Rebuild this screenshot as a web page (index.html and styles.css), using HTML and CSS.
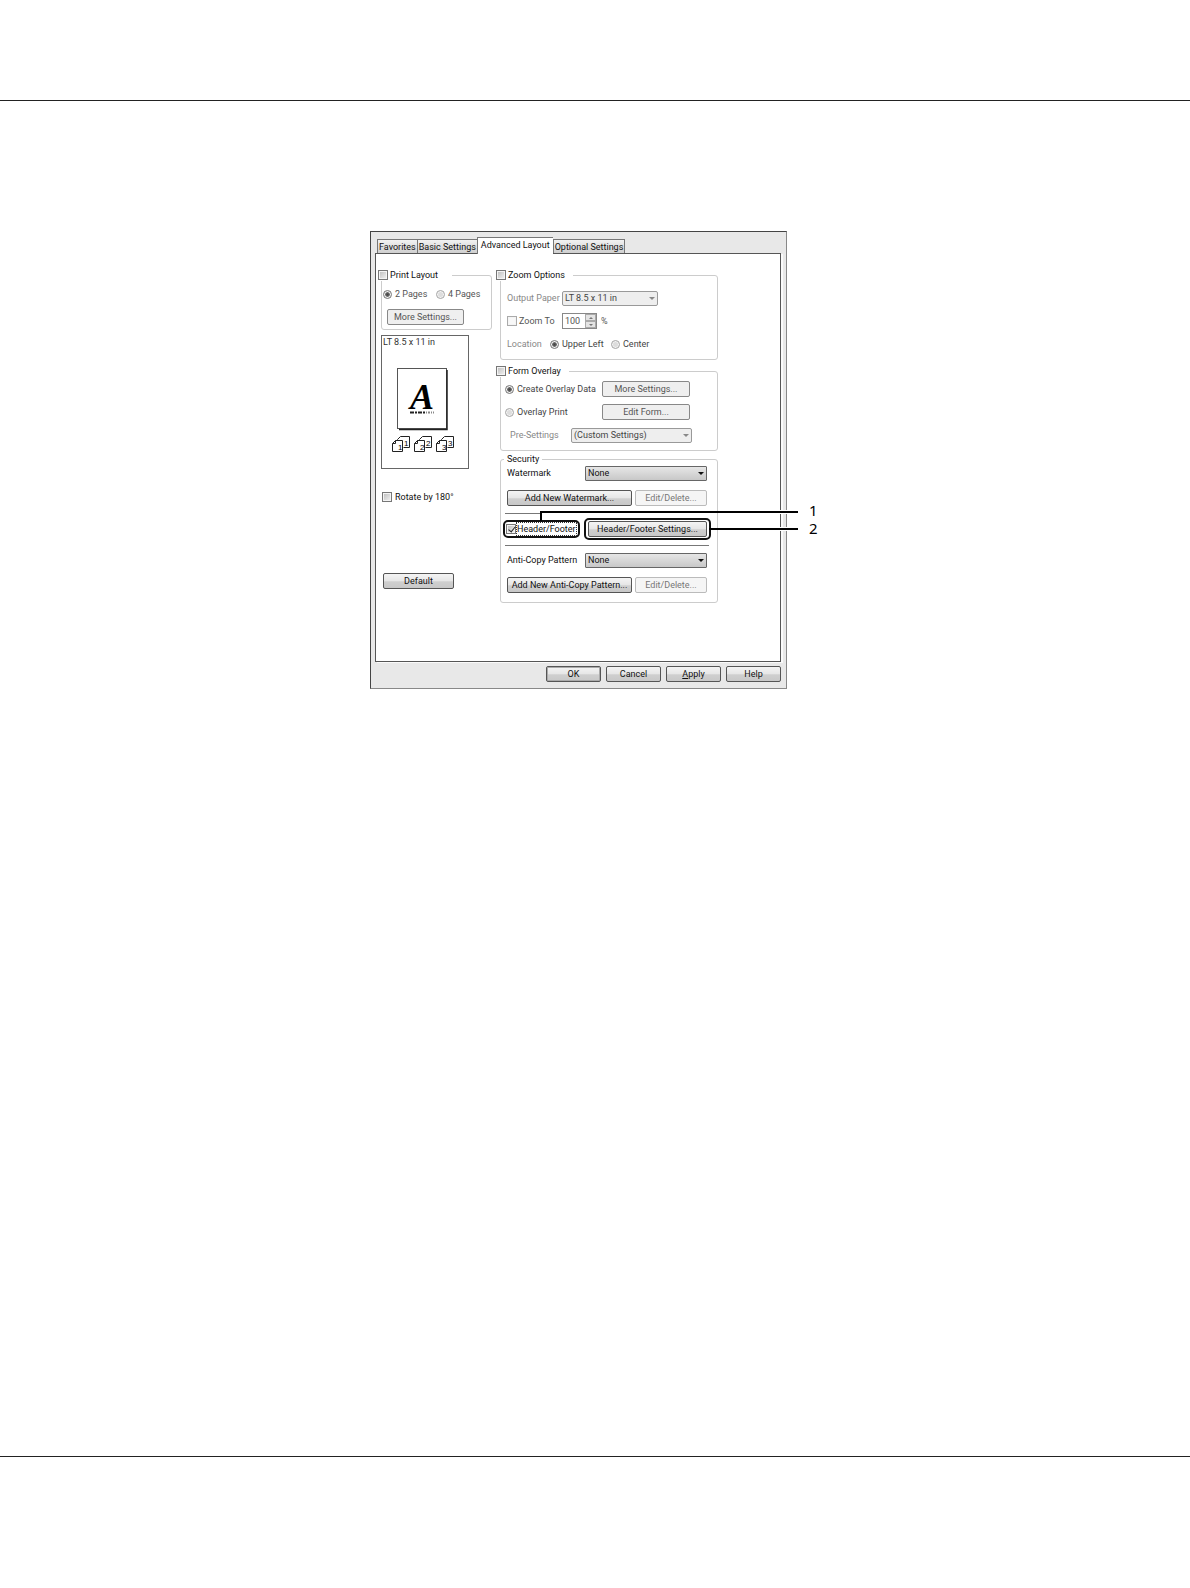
FILE: index.html
```
<!DOCTYPE html>
<html lang="en">
<head>
<meta charset="UTF-8">
<title>Advanced Layout</title>
<link rel="stylesheet" href="styles.css">
</head>
<body>
<header class="page_head"></header>
<main class="page_main">
<div class="figure">
<form class="dialog" onsubmit="return false">
	<div class="tabs" role="tablist">
		<button type="button" role="tab" class="tab">Favorites</button>
		<button type="button" role="tab" class="tab">Basic Settings</button>
		<button type="button" role="tab" class="tab active" aria-selected="true">Advanced Layout</button>
		<button type="button" role="tab" class="tab">Optional Settings</button>
	</div>
	<div class="panel">
		<div class="left">
			<fieldset class="group print">
				<legend><label><input type="checkbox">Print Layout</label></legend>
				<div class="row dim">
					<label class="pages"><input type="radio" name="pages" checked>2 Pages</label>
					<label><input type="radio" name="pages">4 Pages</label>
				</div>
				<button type="button" class="btn off more">More Settings...</button>
			</fieldset>
			<div class="preview">
				<p class="paper">LT 8.5 x 11 in</p>
				<svg width="86" height="100" viewBox="0 0 86 100">
					<rect x="15.5" y="13.5" width="49" height="60" fill="#fff" stroke="#555"/>
					<path d="M65 15v59.500H17" fill="none" stroke="#222" stroke-width="1.500"/>
					<text x="28" y="54" class="big_a">A</text>
					<path d="M28 57.500h15" stroke="#222" stroke-width="2" stroke-dasharray="4 1 2 1"/>
					<path d="M44 57.500h8" stroke="#888" stroke-width="2" stroke-dasharray="1 1 2 1"/>
					<g fill="#fff" stroke="#222">
						<path d="M15.500 86V84.500l3-3h9v11h-6M10.500 88.500l3-3h7v11h-10zM10.500 88.500h3v-3"/>
						<path d="M37.500 86V84.500l3-3h9v11h-6M32.500 88.500l3-3h7v11h-10zM32.500 88.500h3v-3"/>
						<path d="M59.500 86V84.500l3-3h9v11h-6M54.500 88.500l3-3h7v11h-10zM54.500 88.500h3v-3"/>
					</g>
					<g class="nums">
						<text x="16" y="95">1</text><text x="22" y="91">1</text>
						<text x="38" y="95">2</text><text x="44" y="91">2</text>
						<text x="60" y="95">3</text><text x="66" y="91">3</text>
					</g>
				</svg>
			</div>
			<label class="rotate"><input type="checkbox">Rotate by 180°</label>
			<button type="button" class="btn default">Default</button>
		</div>
		<div class="right">
			<fieldset class="group zoom">
				<legend><label><input type="checkbox">Zoom Options</label></legend>
				<div class="row">
					<label class="lbl faint" for="paper">Output Paper</label>
					<span class="sel off paper_sel"><select id="paper"><option>LT 8.5 x 11 in</option></select></span>
				</div>
				<div class="row">
					<label class="lbl dim"><input type="checkbox" class="flat">Zoom To</label>
					<span class="spin">
						<input type="text" value="100" aria-label="Zoom percent">
						<span class="arrows">
							<button type="button" aria-label="Up"></button>
							<button type="button" class="down" aria-label="Down"></button>
						</span>
					</span>
					<span class="dim">%</span>
				</div>
				<div class="row">
					<span class="loc faint">Location</span>
					<label class="upper"><input type="radio" name="loc" checked>Upper Left</label>
					<label><input type="radio" name="loc">Center</label>
				</div>
			</fieldset>
			<fieldset class="group overlay">
				<legend><label><input type="checkbox">Form Overlay</label></legend>
				<div class="row">
					<label class="kind"><input type="radio" name="form" checked>Create Overlay Data</label>
					<button type="button" class="btn off wide">More Settings...</button>
				</div>
				<div class="row">
					<label class="kind"><input type="radio" name="form">Overlay Print</label>
					<button type="button" class="btn off wide">Edit Form...</button>
				</div>
				<div class="row">
					<label class="pre faint" for="pre">Pre-Settings</label>
					<span class="sel off pre_sel"><select id="pre"><option>(Custom Settings)</option></select></span>
				</div>
			</fieldset>
			<fieldset class="group security">
				<legend>Security</legend>
				<div class="row">
					<label class="name" for="wm">Watermark</label>
					<span class="sel"><select id="wm"><option>None</option></select></span>
				</div>
				<div class="row pair">
					<button type="button" class="btn add">Add New Watermark...</button>
					<button type="button" class="btn off light edit">Edit/Delete...</button>
				</div>
				<hr class="short">
				<div class="marked">
					<label class="mark_check"><input type="checkbox" checked><span class="focus">Header/Footer</span></label>
					<span class="mark_btn"><button type="button" class="btn">Header/Footer Settings...</button></span>
				</div>
				<hr>
				<div class="row">
					<label class="name" for="ac">Anti-Copy Pattern</label>
					<span class="sel"><select id="ac"><option>None</option></select></span>
				</div>
				<div class="row pair">
					<button type="button" class="btn add">Add New Anti-Copy Pattern...</button>
					<button type="button" class="btn off light edit">Edit/Delete...</button>
				</div>
			</fieldset>
		</div>
	</div>
	<div class="actions">
		<button type="button" class="btn ok">OK</button>
		<button type="button" class="btn">Cancel</button>
		<button type="button" class="btn"><u>A</u>pply</button>
		<button type="button" class="btn">Help</button>
	</div>
</form>
<!-- callout lines lie over the dialog -->
<svg class="callouts" width="450" height="458" viewBox="0 0 450 458">
	<g fill="none" stroke="#fff" stroke-width="4">
		<path d="M405 281h23M405 298h23"/>
	</g>
	<g fill="none" stroke="#000" stroke-width="2">
		<path d="M171 290v-9h257M339 298h89"/>
	</g>
	<text x="439" y="285">1</text>
	<text x="439" y="303">2</text>
</svg>
</div>
</main>
<footer class="page_foot"></footer>
</body>
</html>
```

FILE: styles.css
```
* {
	box-sizing: border-box;
}
body {
	margin: 0;
	min-height: 100vh;
	display: flex;
	flex-direction: column;
	background: #fff;
	color: #111;
	font-family: Roboto, "Liberation Sans", Arial, sans-serif;
	font-size: 9px;
	line-height: 12px;
}
button, input, select {
	font: inherit;
	color: inherit;
	margin: 0;
}
.page_head {
	height: 101px;
	border-bottom: 1px solid #222;
}
.page_main {
	flex: 1;
	padding-top: 130px;
}
.page_foot {
	height: 132px;
	border-top: 1px solid #222;
}
.figure {
	position: relative;
	width: 450px;
	margin: 0 auto;
	padding-right: 33px;
}

/* dialog window */
.dialog {
	padding: 4px 5px 6px 4px;
	background: #e8e8e8;
	border: 1px solid #888;
	border-top-color: #444;
	border-left: 1px solid #444;
}
.tabs {
	display: flex;
	align-items: flex-end;
	height: 17px;
	padding-left: 2px;
}
.tab {
	height: 14px;
	padding: 0 1px;
	border: 1px solid #777;
	border-bottom: 0;
	border-right: 0;
	background: linear-gradient(#f2f2f2, #cfcfcf);
	line-height: 12px;
	white-space: nowrap;
}
.tab:last-child {
	border-right: 1px solid #777;
}
.tab.active {
	height: 17px;
	margin-bottom: -1px;
	padding: 0 3px 3px;
	background: #fff;
	position: relative;
}
.panel {
	display: flex;
	justify-content: space-between;
	padding: 15px 62px 58px 5px;
	background: #fff;
	border: 1px solid #555;
	box-shadow: 2px 1px 0 #fafafa;
}
.left {
	width: 111px;
}
.right {
	width: 218px;
}

/* groups */
.group {
	min-width: 0;
	margin: 0 0 5px;
	border: 1px solid #ccc;
	border-radius: 3px;
	display: flex;
	flex-direction: column;
	gap: 7px;
}
.group legend {
	height: 12px;
	padding: 0 8px 0 0;
	margin-left: -11px;
	background: #fff;
}
label {
	display: flex;
	align-items: center;
	gap: 3px;
	white-space: nowrap;
}
legend label {
	gap: 2px;
}
.row {
	display: flex;
	align-items: center;
	height: 16px;
}
.dim {
	color: #555;
}
.faint {
	color: #888;
}
.print {
	padding: 5px 1px 4px;
}
.print legend {
	margin-left: -5px;
	padding-right: 14px;
}
.pages {
	width: 53px;
}
.zoom {
	padding: 9px 6px 7px;
}
.overlay {
	padding: 4px 6px 7px;
	margin-bottom: 2px;
}
.security {
	margin: 0;
	padding: 0 6px 9px;
	gap: 0;
}
.security legend {
	margin-left: -3px;
	padding: 0 3px;
}
.lbl {
	width: 55px;
	gap: 2px;
}
.loc {
	width: 43px;
}
.upper {
	width: 61px;
}
.zoom .upper, .zoom .upper + label, .kind {
	color: #444;
}
.kind {
	width: 97px;
	margin-left: -2px;
}
.pre {
	width: 61px;
	margin-left: 3px;
}
.name {
	width: 78px;
}

/* controls */
input[type=checkbox], input[type=radio] {
	appearance: none;
	position: relative;
	flex: none;
	width: 10px;
	height: 10px;
	border: 1px solid #777;
	background: linear-gradient(135deg, #bbb, #f4f4f4);
	box-shadow: inset 0 0 0 1px #f4f4f4;
}
input[type=checkbox].flat {
	border-color: #aaa;
	background: #f8f8f8;
}
input[type=checkbox]:checked::after {
	content: "";
	position: absolute;
	left: 3px;
	top: 0;
	width: 3px;
	height: 6px;
	border: solid #222;
	border-width: 0 1px 1px 0;
	transform: rotate(40deg);
}
input[type=radio] {
	width: 9px;
	height: 9px;
	border-color: #aaa;
	border-radius: 50%;
	background: #ddd;
}
input[type=radio]:checked {
	border-color: #777;
	background: radial-gradient(#444 0, #666 40%, #ddd 60%);
}
.btn {
	height: 16px;
	padding: 0;
	border: 1px solid #555;
	border-radius: 2px;
	background: linear-gradient(#f4f4f4 0, #e6e6e6 50%, #cfcfcf 55%, #c8c8c8);
	line-height: 13px;
	white-space: nowrap;
}
.btn.off {
	border-color: #888;
	background: #efefef;
	color: #555;
}
.btn.light {
	border-color: #bbb;
	background: #f5f5f5;
	color: #777;
}
.more {
	width: 77px;
	margin-left: 4px;
}
.wide {
	width: 88px;
}
.sel {
	position: relative;
	width: 122px;
}
.sel select {
	appearance: none;
	display: block;
	width: 100%;
	height: 15px;
	padding: 0 2px;
	border: 1px solid #666;
	border-radius: 1px;
	background: linear-gradient(#e6e6e6, #c8c8c8);
}
.sel::after {
	content: "";
	position: absolute;
	right: 3px;
	top: 6px;
	border: 3px solid transparent;
	border-top-color: #111;
	border-bottom: 0;
}
.sel.off select {
	border-color: #999;
	border-radius: 2px;
	background: #eee;
	color: #444;
}
.sel.off::after {
	border-top-color: #888;
}
.sel.paper_sel {
	width: 96px;
}
.sel.pre_sel {
	width: 121px;
}
.spin {
	display: flex;
	width: 35px;
	height: 16px;
	margin-right: 4px;
	border: 1px solid #888;
}
.spin input {
	width: 22px;
	padding: 0 2px;
	border: 0;
	color: #555;
}
.arrows {
	display: flex;
	flex-direction: column;
	flex: 1;
}
.arrows button {
	flex: 1;
	display: flex;
	align-items: center;
	justify-content: center;
	padding: 0;
	border: 1px solid #aaa;
	background: #e4e4e4;
}
.arrows button::after {
	content: "";
	border: 2px solid transparent;
	border-top-width: 0;
	border-bottom-color: #777;
}
.arrows .down::after {
	border-top: 2px solid #777;
	border-bottom: 0;
}

/* left column */
.preview {
	width: 88px;
	height: 134px;
	border: 1px solid #666;
}
.paper {
	margin: 0;
	padding: 0 1px;
	height: 19px;
	color: #333;
}
.big_a {
	font: italic bold 36px "Liberation Serif", serif;
}
.nums text {
	font: 8px "Liberation Sans", sans-serif;
}
.rotate {
	margin: 22px 0 70px 1px;
}
.default {
	width: 71px;
	margin-left: 2px;
}

/* security */
.pair {
	gap: 3px;
	margin: 9px 4px 7px 0;
}
.add {
	flex: 1;
}
.edit {
	width: 72px;
}
.security hr {
	width: 204px;
	margin: 0 -2px;
	border: 0;
	border-top: 1px solid #777;
}
.security hr.short {
	width: 35px;
}
.marked {
	display: flex;
	align-items: center;
	justify-content: space-between;
	margin: 4px 0 5px -4px;
}
.security hr + .row {
	margin-top: 6px;
}
.security .pair:last-child {
	margin-bottom: 0;
}
.mark_check {
	height: 18px;
	gap: 0;
	padding: 0 1px;
	border: 2px solid #111;
	border-radius: 5px;
}
.focus {
	border: 1px dotted #333;
}
.mark_btn {
	width: 127px;
	padding: 1px 2px;
	border: 2px solid #111;
	border-radius: 5px;
}
.mark_btn .btn {
	display: block;
	width: 100%;
}

.actions {
	display: flex;
	justify-content: flex-end;
	gap: 5px;
	padding-top: 4px;
}
.actions .btn {
	width: 55px;
}
.btn.ok {
	box-shadow: inset 0 0 0 1px #aaa;
}

.callouts {
	position: absolute;
	left: 0;
	top: 0;
	pointer-events: none;
}
.callouts text {
	font: 15px "Noto Sans", sans-serif;
}
```
